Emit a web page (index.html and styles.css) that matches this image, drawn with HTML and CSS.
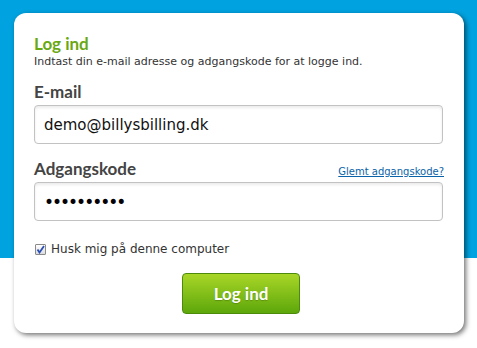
FILE: index.html
```html
<!DOCTYPE html>
<html lang="da">
<head>
  <meta charset="UTF-8" />
  <title>Log ind</title>
  <link rel="stylesheet" href="styles.css">
</head>
<body>

  <div class="login-box">
    <h1>Log ind</h1>
    <p class="intro">Indtast din e-mail adresse og adgangskode for at logge ind.</p>

    <form>
      <div class="field">
        <div class="label-row">
          <label for="email">E-mail</label>
        </div>
        <input type="text" id="email" value="demo@billysbilling.dk" />
      </div>

      <div class="field">
        <div class="label-row">
          <label for="password">Adgangskode</label>
          <a href="#" class="forgot">Glemt adgangskode?</a>
        </div>
        <input type="password" id="password" value="1234567890" />
      </div>

      <label class="remember">
        <input type="checkbox" checked />
        Husk mig på denne computer
      </label>

      <div class="actions">
        <button type="submit">Log ind</button>
      </div>
    </form>
  </div>

</body>
</html>
```

FILE: styles.css
```css
body {
  margin: 0;
  padding: 13px 0 0 14px;
  height: 348px;
  box-sizing: border-box;
  background: linear-gradient(to bottom, #00a2e0 0, #00a2e0 258px, #fff 258px);
  font-family: 'DejaVu Sans', Verdana, sans-serif;
  overflow: hidden;
}

.login-box {
  width: 450px;
  height: 320px;
  box-sizing: border-box;
  padding: 22px 20px 0 20px;
  background: #fff;
  border-radius: 12px;
  box-shadow: 2px 2px 5px rgba(0, 0, 0, 0.55);
}

h1 {
  margin: 0;
  font-family: 'Lato', sans-serif;
  font-weight: bold;
  font-size: 17px;
  color: #6aa812;
  line-height: 18px;
}

.intro {
  margin: 2px 0 0;
  font-size: 11px;
  line-height: 14px;
  color: #333;
}

.field {
  margin-top: 12px;
}

.field + .field {
  margin-top: 14px;
}

.label-row {
  display: flex;
  justify-content: space-between;
  align-items: flex-end;
  height: 22px;
}

.label-row label {
  font-family: 'Lato', sans-serif;
  font-weight: bold;
  font-size: 17px;
  color: #444;
  margin-bottom: 1px;
}

.forgot {
  font-size: 10px;
  color: #0a63a8;
  margin-bottom: 3px;
}

.field input {
  display: block;
  width: 409px;
  height: 39px;
  box-sizing: border-box;
  margin-top: 2px;
  padding: 0 9px;
  border: 1px solid #c2c2c2;
  border-radius: 4px;
  box-shadow: inset 0 2px 3px rgba(0, 0, 0, 0.08);
  font-family: 'DejaVu Sans', sans-serif;
  font-size: 15px;
  color: #111;
}

.field input[type="password"] {
  font-size: 17px;
  letter-spacing: -2px;
  color: #000;
}

.remember {
  display: flex;
  align-items: center;
  gap: 5px;
  margin-top: 21px;
  font-size: 12px;
  color: #333;
}

.remember input {
  appearance: none;
  margin: 0 0 0 1px;
  width: 11px;
  height: 11px;
  border: 1px solid #8a8a8a;
  border-radius: 1px;
  background: linear-gradient(to bottom, #fff, #dcdcdc);
}

.remember input:checked {
  background:
    url("data:image/svg+xml;utf8,<svg xmlns='http://www.w3.org/2000/svg' viewBox='0 0 9 9'><path d='M1.5 4.5 L3.5 7.5 L8 1' fill='none' stroke='%232a4fb8' stroke-width='1.8'/></svg>") center / 9px 9px no-repeat,
    linear-gradient(to bottom, #fff, #dcdcdc);
}

.actions {
  display: flex;
  justify-content: center;
  margin-top: 17px;
}

.actions button {
  width: 118px;
  height: 41px;
  margin-left: 4px;
  border: 1px solid #4c8a0c;
  border-radius: 4px;
  background: linear-gradient(to bottom, #a9d627, #5da70b);
  color: #fff;
  font-family: 'Lato', sans-serif;
  font-weight: bold;
  font-size: 17px;
  text-shadow: 0 1px 1px rgba(0, 0, 0, 0.2);
  cursor: pointer;
}
```
